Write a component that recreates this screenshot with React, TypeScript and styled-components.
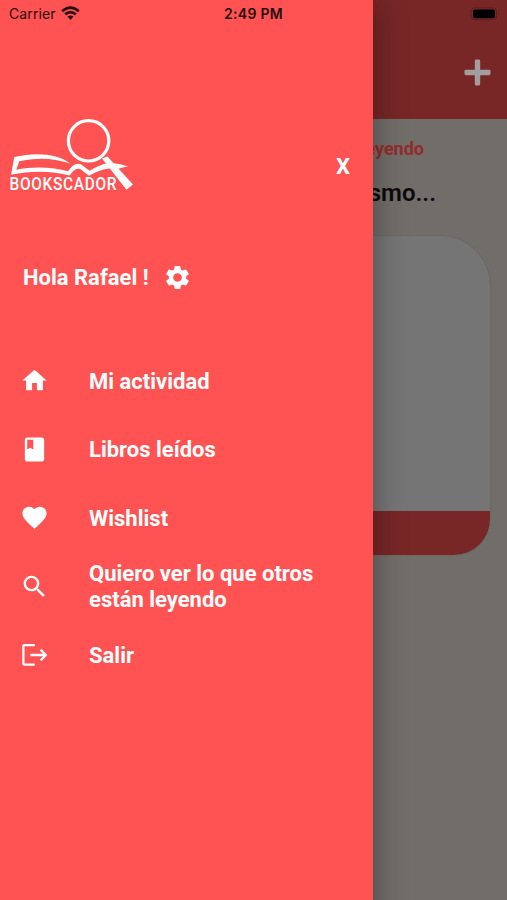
import React from "react";
import styled, { createGlobalStyle } from "styled-components";
import { MdHome, MdClass, MdFavorite, MdSearch, MdSettings } from "react-icons/md";

const GlobalStyle = createGlobalStyle`
  * { box-sizing: border-box; }
  body { margin: 0; font-family: Roboto, "Liberation Sans", sans-serif; }
`;

const Screen = styled.div`
  position: relative;
  height: 900px;
  overflow: hidden;
  background: #716d69;
`;

const Page = styled.main`
  display: flex;
  flex-direction: column;
  height: 100%;
`;

const PageHeader = styled.header`
  display: flex;
  justify-content: flex-end;
  height: 119px;
  padding: 59px 16px 0 0;
  background: #782626;
`;

const PageBody = styled.section`
  display: flex;
  flex-direction: column;
  align-items: flex-end;
  padding-top: 18px;
`;

const PageLabel = styled.div`
  margin-right: 83px;
  font-size: 18px;
  line-height: 24px;
  font-weight: 700;
  color: #932b2b;
`;

const BookTitle = styled.h1`
  margin: 16px 71px 0 0;
  font-size: 24px;
  line-height: 32px;
  font-weight: 600;
  color: #0c0b0b;
`;

const BookCard = styled.article`
  display: flex;
  flex-direction: column;
  justify-content: flex-end;
  width: 472px;
  height: 319px;
  margin: 27px 17.5px 0 0;
  border-radius: 50px 50px 36px 36px;
  overflow: hidden;
  background: #757575;
  box-shadow: 0 0 2px rgba(0, 0, 0, 0.12);
`;

const CardFooter = styled.div`
  height: 44px;
  background: #782626;
`;

const Drawer = styled.aside`
  position: absolute;
  inset: 0 auto -40px 0;
  display: flex;
  flex-direction: column;
  width: 372.5px;
  padding-top: 117px;
  background: #ff5252;
  color: #fff;
  box-shadow: 0 0 30px rgba(0, 0, 0, 0.35);
`;

const DrawerTop = styled.div`
  display: flex;
  justify-content: space-between;
  align-items: flex-start;
  height: 75px;
  padding: 0 22.5px 0 7px;
`;

const CloseButton = styled.button`
  margin-top: 36px;
  padding: 0;
  border: 0;
  background: none;
  color: inherit;
  font: 700 22px/28px Roboto, sans-serif;
`;

const Greeting = styled.div`
  display: flex;
  align-items: center;
  gap: 14.5px;
  height: 32px;
  margin: 69px 0 0 23px;
  font-size: 22px;
  font-weight: 700;
  svg { display: block; }
`;

const Menu = styled.nav`
  display: flex;
  flex-direction: column;
  margin-top: 54px;
`;

const MenuItem = styled.a`
  display: grid;
  grid-template-columns: 69px 1fr;
  align-items: center;
  height: 68.5px;
  padding-left: 20px;
  font-size: 22px;
  line-height: 26px;
  font-weight: 700;
  svg { display: block; margin-top: -1px; }
`;

const MenuText = styled.span`
  max-width: 240px;
  padding-top: 1px;
`;

const StatusBar = styled.div`
  position: absolute;
  inset: 0 0 auto 0;
  display: grid;
  grid-template-columns: 1fr auto 1fr;
  align-items: center;
  height: 27px;
  padding: 0 7px 0 9px;
  font-family: Inter, "Liberation Sans", sans-serif;
  font-size: 14px;
  color: #260c0c;
`;

const Carrier = styled.div`
  display: flex;
  align-items: center;
  gap: 5px;
  letter-spacing: 0.1px;
  svg { margin-top: -1px; }
`;

const Clock = styled.div`
  margin: 0 2px 0 0;
  font-weight: 600;
  letter-spacing: 0.3px;
`;

const Battery = styled.svg`
  justify-self: end;
`;

const Logo = () => (
  <svg width="130" height="76" viewBox="7 117 130 76" fill="none">
    <circle cx="88.6" cy="140.8" r="20.2" stroke="#fff" strokeWidth="3.2" />
    <path d="M102 158.500 L107.500 156.500 L133 184.500 L126.500 189.800 Z" fill="#fff" />
    <path
      d="M14.3 157 C33 152.500 57 152.500 70 163.500 C54 157.800 36 157.300 19.300 161.200 L16.300 169.800 C34 166 54 167.300 68 171.300 C72 165.500 77 161.800 82 165 L89.500 170.800 C94 168.500 101 164 107.500 163.500 L112.500 168.300 C104 168.500 97 171.500 89 175.800 L80.500 169.300 C76.500 167.500 72.500 171 69.800 175.600 C52 170.600 31 170.500 11 174.800 Z"
      fill="#fff"
    />
    <path d="M113 163.200 C119 163.800 124 165 128 166.500 C124 167 121 168 117.500 169.200 Z" fill="#fff" />
    <g transform="translate(9.500 190) scale(0.860 1)">
      <text
        fill="#fff"
        fontFamily="Roboto, sans-serif"
        fontSize="18"
        fontWeight="500"
        textLength="124.500"
        lengthAdjust="spacing"
      >
        BOOKSCADOR
      </text>
    </g>
  </svg>
);

const PlusIcon = () => (
  <svg width="27" height="27" viewBox="0 0 27 27" fill="#a09e9e">
    <rect x="0.500" y="10.800" width="26" height="5.400" rx="1.400" />
    <rect x="10.800" y="0.500" width="5.400" height="26" rx="1.400" />
  </svg>
);

const WifiIcon = () => (
  <svg width="19" height="15" viewBox="0 0 19 15" fill="none" stroke="#260c0c" strokeWidth="2.700">
    <path d="M1.200 5.200 Q9.500 -1.800 17.800 5.200" />
    <path d="M4.200 8.400 Q9.500 4 14.800 8.400" />
    <path d="M6.500 10.600 Q9.500 8.300 12.500 10.600 L9.500 14 Z" fill="#260c0c" stroke="none" />
  </svg>
);

const ExitIcon = () => (
  <svg width="28" height="28" viewBox="0 0 28 28" fill="none" stroke="#fff" strokeWidth="2.300">
    <path d="M14.800 4.200 H4.500 Q3.400 4.200 3.400 5.300 V22.500 Q3.400 23.600 4.500 23.600 H14.800" />
    <path d="M10.300 14 H25.800 M20.600 8.600 L25.800 14 L20.600 19.400" />
  </svg>
);

const items = [
  { label: "Mi actividad", icon: <MdHome size={29} /> },
  { label: "Libros leídos", icon: <MdClass size={29} /> },
  { label: "Wishlist", icon: <MdFavorite size={29} /> },
  { label: "Quiero ver lo que otros están leyendo", icon: <MdSearch size={29} /> },
  { label: "Salir", icon: <ExitIcon /> },
];

export default function App() {
  return (
    <Screen>
      <GlobalStyle />
      <Page>
        <PageHeader>
          <PlusIcon />
        </PageHeader>
        <PageBody>
          <PageLabel>Leyendo</PageLabel>
          <BookTitle>Los renglones del mismo...</BookTitle>
          <BookCard>
            <CardFooter />
          </BookCard>
        </PageBody>
      </Page>
      <Drawer>
        <DrawerTop>
          <Logo />
          <CloseButton aria-label="Cerrar">X</CloseButton>
        </DrawerTop>
        <Greeting>
          Hola Rafael !
          <MdSettings size={29} />
        </Greeting>
        <Menu>
          {items.map((item) => (
            <MenuItem key={item.label}>
              {item.icon}
              <MenuText>{item.label}</MenuText>
            </MenuItem>
          ))}
        </Menu>
      </Drawer>
      <StatusBar>
        <Carrier>
          Carrier
          <WifiIcon />
        </Carrier>
        <Clock>2:49 PM</Clock>
        <Battery width="30" height="14" viewBox="0 0 30 14">
          <rect x="1" y="0.800" width="25.500" height="12" rx="3.500" fill="none" stroke="#5e1e1e" />
          <rect x="3" y="2.500" width="22" height="8.800" rx="1.800" fill="#000" />
          <path d="M28 5 Q30 6.800 28 8.600 Z" fill="#5e1e1e" />
        </Battery>
      </StatusBar>
    </Screen>
  );
}
